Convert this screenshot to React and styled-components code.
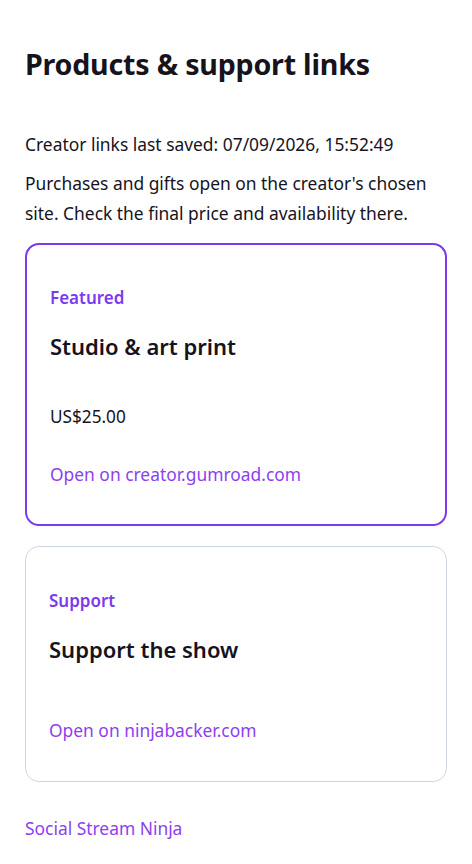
import React from 'react';
import styled, { createGlobalStyle } from 'styled-components';

const GlobalStyle = createGlobalStyle`
    html, body {
        margin: 0;
        padding: 0;
        background: #ffffff;
    }
    body {
        font-family: "Noto Sans", "Open Sans", sans-serif;
        color: #16131d;
    }
`;

const Page = styled.main`
    padding: 28px 25px 24px 25px;
    display: flex;
    flex-direction: column;
`;

const Title = styled.h1`
    font-size: 28.6px;
    font-weight: 700;
    line-height: 40px;
    margin: 16px 0 0 0;
    letter-spacing: -0.2px;
`;

const Meta = styled.p`
    font-size: 17.4px;
    line-height: 24px;
    margin: 48px 0 0 0;
`;

const Note = styled.p`
    font-size: 17.4px;
    line-height: 30px;
    margin: 12px 0 0 0;
`;

const CardList = styled.div`
    display: flex;
    flex-direction: column;
    gap: 20px;
    margin-top: 15px;
`;

const Card = styled.section`
    border: ${p => (p.$featured ? '2px solid #7c3aed' : '1px solid #cfd6e2')};
    border-radius: 14px;
    padding: ${p => (p.$featured ? '24px 23px 38px' : '25px 23px 39px')};
    display: flex;
    flex-direction: column;
`;

const Label = styled.p`
    font-size: 17px;
    font-weight: 600;
    line-height: 24px;
    color: #7c3aed;
    margin: 17px 0 0 0;
`;

const CardTitle = styled.h2`
    font-size: 22px;
    font-weight: 600;
    line-height: 30px;
    margin: 21px 0 0 0;
`;

const Price = styled.p`
    font-size: 17.2px;
    line-height: 24px;
    margin: 44px 0 0 0;
`;

const CardLink = styled.a`
    font-size: 17.4px;
    line-height: 24px;
    color: #8b3ff0;
    text-decoration: none;
    margin-top: ${p => p.$gap}px;
`;

const Footer = styled.a`
    font-size: 17.4px;
    line-height: 24px;
    color: #8b3ff0;
    text-decoration: none;
    margin-top: 34px;
    align-self: flex-start;
`;

const links = [
    {
        label: 'Featured',
        title: 'Studio & art print',
        price: 'US$25.00',
        host: 'creator.gumroad.com',
        featured: true,
    },
    {
        label: 'Support',
        title: 'Support the show',
        host: 'ninjabacker.com',
        featured: false,
    },
];

export default function App() {
    return (
        <>
            <GlobalStyle />
            <Page>
                <Title>Products &amp; support links</Title>
                <Meta>Creator links last saved: 07/09/2026, 15:52:49</Meta>
                <Note>
                    Purchases and gifts open on the creator's chosen site. Check the final price and availability there.
                </Note>
                <CardList>
                    {links.map(item => (
                        <Card key={item.title} $featured={item.featured}>
                            <Label>{item.label}</Label>
                            <CardTitle>{item.title}</CardTitle>
                            {item.price && <Price>{item.price}</Price>}
                            <CardLink href="#" $gap={item.price ? 33 : 54}>
                                Open on {item.host}
                            </CardLink>
                        </Card>
                    ))}
                </CardList>
                <Footer href="#">Social Stream Ninja</Footer>
            </Page>
        </>
    );
}
